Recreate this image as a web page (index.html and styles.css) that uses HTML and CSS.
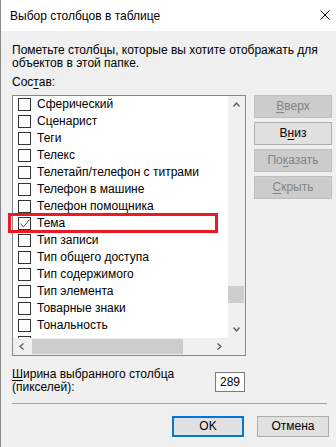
FILE: index.html
```html
<!DOCTYPE html>
<html lang="ru">
<head>
<meta charset="utf-8">
<title>Выбор столбцов в таблице</title>
<link rel="stylesheet" href="styles.css">
</head>
<body>
<div class="window">
  <div class="titlebar">
    <span class="title">Выбор столбцов в таблице</span>
    <svg class="close" width="10" height="10" viewBox="0 0 10 10"><path d="M0.5 0.5 L9.5 9.5 M9.5 0.5 L0.5 9.5" stroke="#000" stroke-width="1" fill="none"/></svg>
  </div>
  <div class="content">
    <p class="intro">Пометьте столбцы, которые вы хотите отображать для<br>объектов в этой папке.</p>
    <div class="label">Сос<u>т</u>ав:</div>
    <div class="main">
      <div class="listbox">
        <div class="rows">
          <div class="row"><span class="cb"></span>Сферический</div>
          <div class="row"><span class="cb"></span>Сценарист</div>
          <div class="row"><span class="cb"></span>Теги</div>
          <div class="row"><span class="cb"></span>Телекс</div>
          <div class="row"><span class="cb"></span>Телетайп/телефон с титрами</div>
          <div class="row"><span class="cb"></span>Телефон в машине</div>
          <div class="row"><span class="cb"></span>Телефон помощника</div>
          <div class="row"><span class="cb checked"><svg width="13" height="13" viewBox="0 0 13 13"><path d="M2.5 6.5 L5.5 10 L11.5 2.5" stroke="#4d4d4d" stroke-width="1" fill="none"/></svg></span>Тема</div>
          <div class="row"><span class="cb"></span>Тип записи</div>
          <div class="row"><span class="cb"></span>Тип общего доступа</div>
          <div class="row"><span class="cb"></span>Тип содержимого</div>
          <div class="row"><span class="cb"></span>Тип элемента</div>
          <div class="row"><span class="cb"></span>Товарные знаки</div>
          <div class="row"><span class="cb"></span>Тональность</div>
          <div class="row"><span class="cb"></span></div>
        </div>
        <div class="vscroll">
          <div class="sbtn"><svg width="7" height="5" viewBox="0 0 7 5"><path d="M0.5 4.5 L3.5 1 L6.5 4.5" stroke="#606060" stroke-width="1.4" fill="none"/></svg></div>
          <div class="vtrack"><div class="vthumb"></div></div>
          <div class="sbtn"><svg width="7" height="5" viewBox="0 0 7 5"><path d="M0.5 0.5 L3.5 4 L6.5 0.5" stroke="#606060" stroke-width="1.4" fill="none"/></svg></div>
        </div>
        <div class="hscroll">
          <div class="sbtn"><svg width="5" height="7" viewBox="0 0 5 7"><path d="M4.5 0.5 L1 3.5 L4.5 6.5" stroke="#606060" stroke-width="1.4" fill="none"/></svg></div>
          <div class="htrack"><div class="hthumb"></div></div>
          <div class="sbtn"><svg width="5" height="7" viewBox="0 0 5 7"><path d="M0.5 0.5 L4 3.5 L0.5 6.5" stroke="#606060" stroke-width="1.4" fill="none"/></svg></div>
        </div>
        <div class="corner"></div>
      </div>
      <div class="side">
        <button class="btn disabled"><u>В</u>верх</button>
        <button class="btn">В<u>н</u>из</button>
        <button class="btn disabled">По<u>к</u>азать</button>
        <button class="btn disabled"><u>С</u>крыть</button>
      </div>
    </div>
    <div class="widthrow">
      <div class="wlabel"><u>Ш</u>ирина выбранного столбца<br>(пикселей):</div>
      <div class="input">289</div>
    </div>
    <div class="sep"></div>
    <div class="footer">
      <button class="btn ok">OK</button>
      <button class="btn">Отмена</button>
    </div>
  </div>
  <div class="highlight"></div>
</div>
</body>
</html>
```

FILE: styles.css
```css
* { box-sizing: border-box; }
html, body { margin: 0; padding: 0; }
body {
  width: 336px;
  height: 447px;
  overflow: hidden;
  background: #f0f0f0;
  font-family: "Liberation Sans", Arial, sans-serif;
  font-size: 12px;
  color: #000;
}
.window {
  position: relative;
  width: 336px;
  height: 447px;
  border-left: 1px solid #8a8a8a;
  background: #f0f0f0;
}
.titlebar {
  height: 31px;
  background: #fff;
  display: flex;
  align-items: center;
  justify-content: space-between;
  padding: 0 6px 0 9px;
}
.title { line-height: 14px; padding-top: 1px; }
.close { display: block; margin-top: -1px; }
.content {
  padding: 13px 0 0 11px;
}
.intro {
  margin: 0;
  line-height: 13px;
}
.label {
  margin-top: 6px;
  line-height: 13px;
}
u { text-decoration-thickness: 1px; text-underline-offset: 2px; }
.main {
  display: flex;
  margin-top: 6px;
  align-items: flex-start;
}
.listbox {
  width: 234px;
  height: 261px;
  border: 1px solid #828790;
  background: #fff;
  display: grid;
  grid-template-columns: 215px 17px;
  grid-template-rows: 242px 17px;
}
.rows {
  overflow: hidden;
  padding-left: 5px;
}
.row {
  height: 17px;
  display: flex;
  align-items: center;
  white-space: nowrap;
  line-height: 13px;
}
.cb {
  width: 13px;
  height: 13px;
  border: 1px solid #333;
  background: #fff;
  margin-right: 6px;
  flex: none;
  position: relative;
}
.cb svg { position: absolute; left: -1px; top: -1px; }
.vscroll {
  background: #f0f0f0;
  display: flex;
  flex-direction: column;
}
.sbtn {
  flex: none;
  width: 17px;
  height: 17px;
  display: flex;
  align-items: center;
  justify-content: center;
}
.sbtn svg { display: block; }
.vtrack { flex: 1; position: relative; }
.vthumb {
  margin-top: 173px;
  height: 17px;
  margin-left: 0;
  width: 16px;
  background: #cdcdcd;
}
.hscroll {
  background: #f0f0f0;
  display: flex;
}
.htrack { flex: 1; padding-top: 1px; }
.hthumb {
  margin-left: 2px;
  width: 151px;
  height: 15px;
  background: #cdcdcd;
}
.corner { background: #f0f0f0; }
.side {
  display: flex;
  flex-direction: column;
  gap: 4px;
  margin-left: 8px;
}
.btn {
  font: inherit;
  width: 78px;
  height: 23px;
  padding: 0;
  background: #e1e1e1;
  border: 1px solid #adadad;
  color: #000;
  line-height: 13px;
}
.btn.disabled {
  background: #cccccc;
  border-color: #bfbfbf;
  color: #838383;
}
.widthrow {
  display: flex;
  justify-content: space-between;
  align-items: flex-start;
  width: 233px;
  margin-top: 12px;
}
.wlabel { line-height: 13px; }
.input {
  margin-top: 4px;
  width: 30px;
  height: 20px;
  border: 1px solid #7a7a7a;
  background: #fff;
  text-align: center;
  line-height: 18px;
}
.sep {
  margin-top: 9px;
  width: 315px;
  height: 1px;
  background: #a0a0a0;
}
.footer {
  display: flex;
  gap: 13px;
  margin-top: 12px;
  padding-left: 160px;
}
.footer .btn { width: 72px; height: 21px; }
.btn.ok { border: 2px solid #0078d7; }
.highlight {
  position: absolute;
  left: 7px;
  top: 213px;
  width: 210px;
  height: 20px;
  border: 3px solid #e81c24;
}
```
